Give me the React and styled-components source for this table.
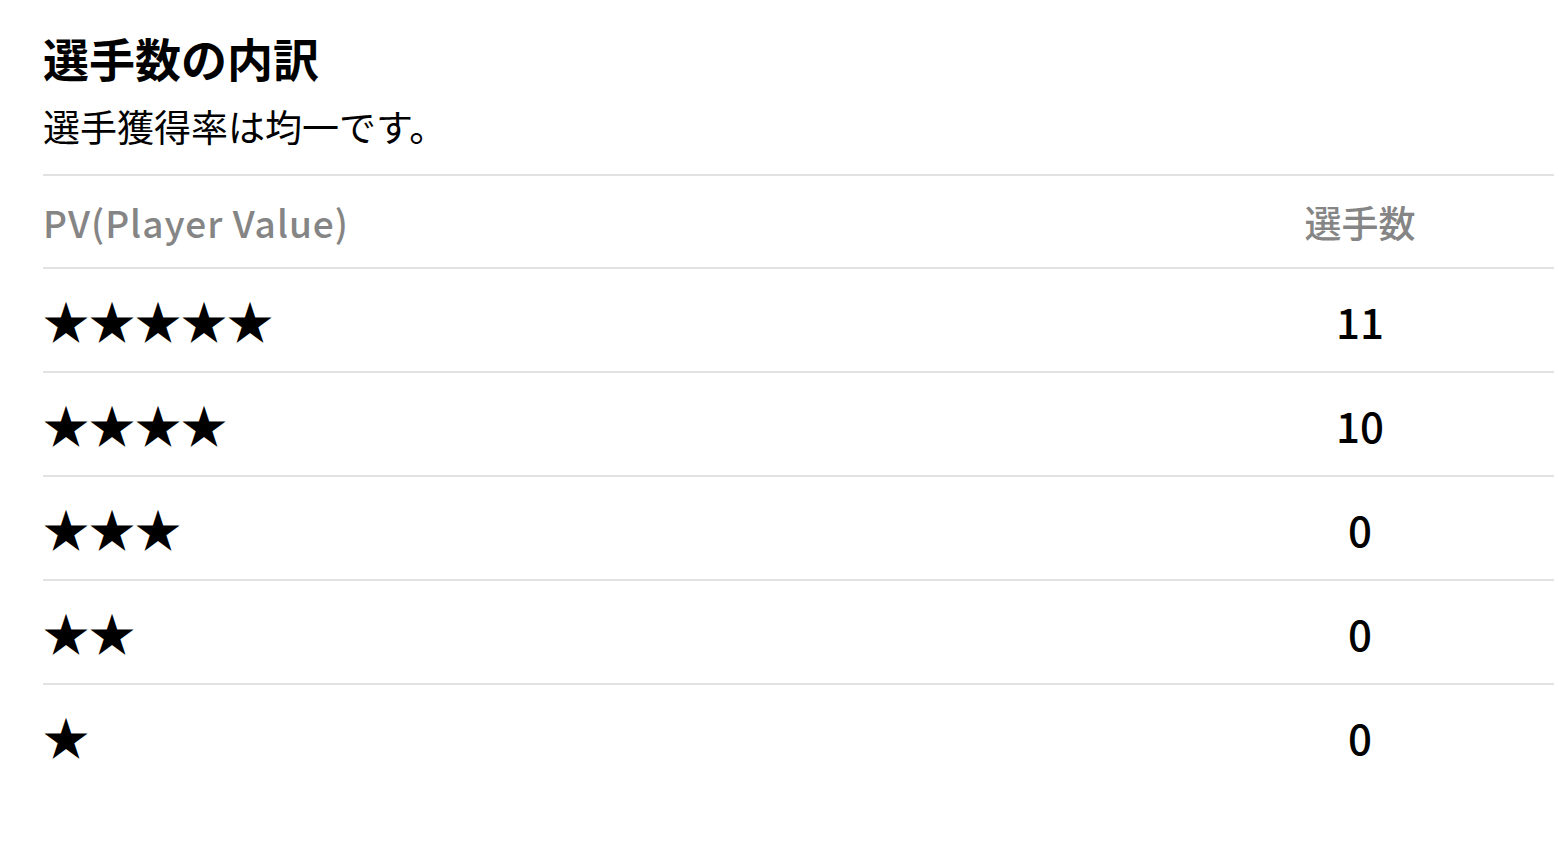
import React from "react";
import styled, { createGlobalStyle } from "styled-components";

const Global = createGlobalStyle`
  html, body { margin: 0; padding: 0; background: #fff; overflow: hidden; }
  body { font-family: "Noto Sans CJK JP", "Noto Sans", sans-serif; color: #000; }
`;

const Page = styled.div`
  padding: 26px 0 0 43px;
  width: 1554px;
  box-sizing: border-box;
`;

const Title = styled.h2`
  margin: 0;
  font-size: 46px;
  font-weight: 700;
  line-height: 62px;
`;

const Lead = styled.p`
  margin: 10px 0 0;
  font-size: 37px;
  font-weight: 400;
  line-height: 56px;
`;

const Table = styled.div`
  margin-top: 20px;
  display: grid;
  grid-template-columns: 1fr 388px;
  border-top: 2px solid #e2e2e2;
`;

const Cell = styled.div`
  display: flex;
  align-items: center;
  justify-content: ${(p) => (p.$center ? "center" : "flex-start")};
  height: ${(p) => (p.$head ? "91px" : "102px")};
  border-bottom: ${(p) => (p.$last ? "none" : "2px solid #e2e2e2")};
  color: ${(p) => (p.$head ? "#858585" : "#000")};
  font-size: ${(p) => (p.$head ? "37px" : "42px")};
  font-weight: ${(p) => (p.$head ? 500 : 500)};
  letter-spacing: ${(p) => (p.$head && !p.$center ? "1px" : "0")};
`;

const Stars = styled.span`
  font-family: "Noto Sans CJK JP", sans-serif;
  font-size: 46px;
  line-height: 1;
  position: relative;
  top: -1px;
`;

const Num = styled.span`
  position: relative;
  top: 0;
`;

const rows = [
  [5, 11],
  [4, 10],
  [3, 0],
  [2, 0],
  [1, 0],
];

export default function App() {
  return (
    <Page>
      <Global />
      <Title>選手数の内訳</Title>
      <Lead>選手獲得率は均一です。</Lead>
      <Table>
        <Cell $head>PV(Player Value)</Cell>
        <Cell $head $center>選手数</Cell>
        {rows.map(([s, n], i) => (
          <React.Fragment key={s}>
            <Cell $last={i === rows.length - 1}>
              <Stars>{"★".repeat(s)}</Stars>
            </Cell>
            <Cell $center $last={i === rows.length - 1}>
              <Num>{n}</Num>
            </Cell>
          </React.Fragment>
        ))}
      </Table>
    </Page>
  );
}
